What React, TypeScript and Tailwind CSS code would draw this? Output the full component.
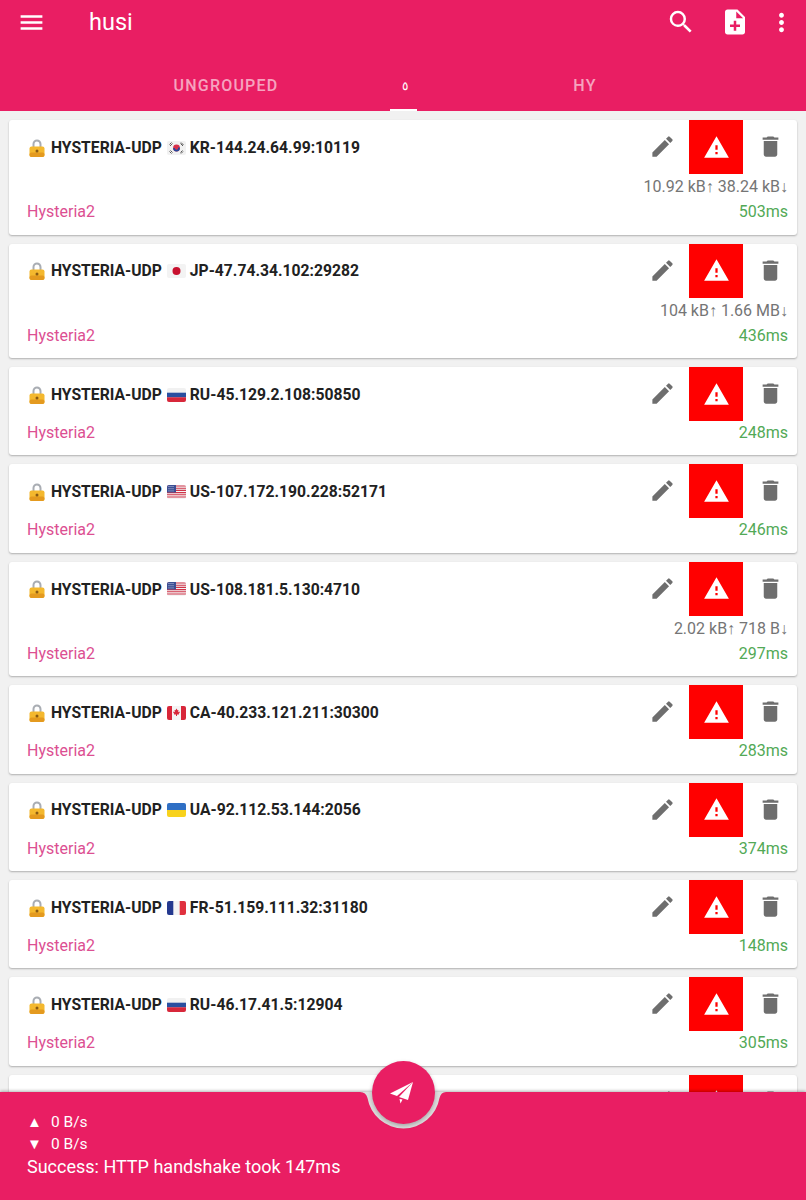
import { MdDelete, MdEdit, MdMenu, MdMoreVert, MdNoteAdd, MdSearch, MdWarning } from "react-icons/md";

type Server = {
  flag?: string;
  host?: string;
  ping?: string;
  traffic?: string;
};

const SERVERS: Server[] = [
  { flag: "kr", host: "KR-144.24.64.99:10119", ping: "503ms", traffic: "10.92 kB↑ 38.24 kB↓" },
  { flag: "jp", host: "JP-47.74.34.102:29282", ping: "436ms", traffic: "104 kB↑ 1.66 MB↓" },
  { flag: "ru", host: "RU-45.129.2.108:50850", ping: "248ms" },
  { flag: "us", host: "US-107.172.190.228:52171", ping: "246ms" },
  { flag: "us", host: "US-108.181.5.130:4710", ping: "297ms", traffic: "2.02 kB↑ 718 B↓" },
  { flag: "ca", host: "CA-40.233.121.211:30300", ping: "283ms" },
  { flag: "ua", host: "UA-92.112.53.144:2056", ping: "374ms" },
  { flag: "fr", host: "FR-51.159.111.32:31180", ping: "148ms" },
  { flag: "ru", host: "RU-46.17.41.5:12904", ping: "305ms" },
  // next row is almost entirely behind the bottom bar, only its buttons peek out
  {},
];

function Flag({ code }: { code: string }) {
  return (
    <svg width="19" height="14" viewBox="0 0 19 14" className="shrink-0 rounded-[2px]">
      {code === "kr" && (
        <>
          <rect width="19" height="14" fill="#f1f1f1" />
          <circle cx="9.500" cy="7" r="3.400" fill="#d8304a" />
          <path d="M6.100 7a3.400 3.400 0 0 0 6.800 0c0-1-1.700-1-1.700 0a1.700 1.700 0 0 1-3.400 0z" fill="#25479b" />
          <path d="M2.500 3.500l2-2M3 5l2.500-2.500M14 1.500l2.500 2.500M13.500 2.500l2.500 2.500M2.500 10.500l2 2M3.500 9.500l2 2M14 12.500l2-2M13.500 11.500l2-2" stroke="#333" strokeWidth=".8" />
        </>
      )}
      {code === "jp" && (
        <>
          <rect width="19" height="14" fill="#f3f3f3" />
          <circle cx="9.500" cy="7" r="4" fill="#c8102e" />
        </>
      )}
      {code === "ru" && (
        <>
          <rect width="19" height="14" fill="#f1f1f1" />
          <rect y="4.700" width="19" height="4.700" fill="#2a4fa0" />
          <rect y="9.300" width="19" height="4.700" fill="#d8273a" />
        </>
      )}
      {code === "us" && (
        <>
          <rect width="19" height="14" fill="#f4f4f4" />
          <path d="M0 1h19M0 3.200h19M0 5.400h19M0 7.600h19M0 9.800h19M0 12h19" stroke="#d0344a" strokeWidth="1.100" />
          <rect width="9" height="7.500" fill="#3c4f94" />
          <path d="M1.500 1.500h6M1.500 3.700h6M1.500 5.900h6" stroke="#dfe3f2" strokeWidth=".8" strokeDasharray="1 1" />
        </>
      )}
      {code === "ca" && (
        <>
          <rect width="19" height="14" fill="#f4f4f4" />
          <rect width="5" height="14" fill="#d8273a" />
          <rect x="14" width="5" height="14" fill="#d8273a" />
          <path d="M9.500 2.500l1 1.800 1-.4-.4 2.300 1.400-.7.300 1-1 1.300.2.700h-2v1.500h-1V8.500h-2l.2-.7-1-1.300.3-1 1.400.7-.4-2.300 1 .4z" fill="#d8273a" />
        </>
      )}
      {code === "ua" && (
        <>
          <rect width="19" height="7" fill="#2f6fc4" />
          <rect y="7" width="19" height="7" fill="#f8d21c" />
        </>
      )}
      {code === "fr" && (
        <>
          <rect width="19" height="14" fill="#f4f4f4" />
          <rect width="6.300" height="14" fill="#24398f" />
          <rect x="12.700" width="6.300" height="14" fill="#e0313f" />
        </>
      )}
    </svg>
  );
}

function Lock() {
  return (
    <svg width="18" height="20" viewBox="0 0 18 20" className="shrink-0 ml-[1px]">
      <path d="M4.500 9V6a4.500 4.500 0 0 1 9 0v3h-2V6a2.500 2.500 0 0 0-5 0v3z" fill="#a9adb3" />
      <rect x="1.500" y="8.500" width="15" height="10.500" rx="2" fill="#f4b82e" />
      <rect x="1.500" y="14.500" width="15" height="4.500" rx="2" fill="#e49a1f" />
      <circle cx="9" cy="13" r="1.500" fill="#8a5a12" />
    </svg>
  );
}

function ServerCard({ server }: { server: Server }) {
  return (
    <div className={`shrink-0 bg-white rounded-[3px] shadow-[0_1px_2px_rgba(0,0,0,0.28)] pl-[18px] ${server.traffic ? "h-[114.5px]" : "h-[88.4px]"}`}>
      <div className="flex items-start h-[54px]">
        <div className="flex items-center flex-1 h-[54px] pt-[1px] text-[15.7px] font-bold text-[#212121]">
          {server.host && (
            <>
              <Lock />
              <span className="ml-[5px]">HYSTERIA-UDP</span>
              <span className="ml-[5px]"><Flag code={server.flag ?? ""} /></span>
              <span className="ml-[4px]">{server.host}</span>
            </>
          )}
        </div>
        <div className="flex items-center text-[#6e6e6e]">
          <div className="w-[54px] h-[54px] flex items-center justify-center pb-[1px]">
            <MdEdit size={27} />
          </div>
          <div className="w-[54px] h-[54px] flex items-center justify-center bg-[#ff0000]">
            <MdWarning size={27} color="#fff" />
          </div>
          <div className="w-[54px] h-[54px] flex items-center justify-center pb-[1px]">
            <MdDelete size={27} />
          </div>
        </div>
      </div>
      {server.traffic && (
        <div className="h-[26px] flex items-center justify-end pr-[9px] text-[16px] text-[#757575]">
          {server.traffic}
        </div>
      )}
      {server.host && (
        <div className="flex items-center justify-between h-[24px] pr-[9px] text-[16px]">
          <span className="text-[#dc4f92]">Hysteria2</span>
          <span className="text-[#52a956]">{server.ping}</span>
        </div>
      )}
    </div>
  );
}

export default function App() {
  return (
    <div className="relative flex flex-col h-[1200px] w-[806px] overflow-hidden bg-[#f1f1f1] font-['Roboto',sans-serif]">
      <header className="shrink-0 h-[111px] bg-[#e91e63] text-white">
        <div className="flex items-center h-[44px]">
          <div className="w-[63px] flex justify-center">
            <MdMenu size={29} />
          </div>
          <span className="ml-[26px] pt-[2px] text-[23.500px] leading-none">husi</span>
          <div className="flex items-center ml-auto pr-[10px]">
            <MdSearch size={30} />
            <MdNoteAdd size={30} className="ml-[24px]" />
            <MdMoreVert size={29} className="ml-[17px]" />
          </div>
        </div>
        <div className="grid grid-cols-3 w-[540px] ml-[135px] h-[67px] text-[16px] font-medium tracking-[1.200px]">
          <div className="flex items-center justify-center pl-[2px] pt-[18px] pb-[2px] text-white/60">UNGROUPED</div>
          <div className="relative flex items-center justify-center pt-[18px] pb-[2px]">
            <span className="text-[12px] tracking-normal">٥</span>
            <div className="absolute bottom-0 left-[75px] w-[27px] h-[2px] bg-white" />
          </div>
          <div className="flex items-center justify-center pt-[18px] pb-[2px] text-white/60">HY</div>
        </div>
      </header>

      <main className="flex-1 min-h-0 overflow-hidden flex flex-col gap-[9px] pt-[9px] px-[9px]">
        {SERVERS.map((server, i) => (
          <ServerCard key={i} server={server} />
        ))}
      </main>

      <footer className="relative shrink-0 h-[108px] bg-[#e91e63] text-white shadow-[0_-1px_3px_rgba(0,0,0,0.3)] pl-[27px] pt-[19px]">
        <div className="flex items-center h-[22px] pt-[1px] text-[15.500px]">
          <span className="w-[24px] text-[15px] leading-none">▲</span>0 B/s
        </div>
        <div className="flex items-center h-[22px] pt-[1px] text-[15.500px]">
          <span className="w-[24px] text-[15px] leading-none">▼</span>0 B/s
        </div>
        <div className="text-[18px] leading-[23px]">Success: HTTP handshake took 147ms</div>
      </footer>

      {/* cradle cut into the bar, then the button on top of it */}
      <svg width="90" height="44" viewBox="0 0 90 44" className="absolute left-[358px] top-[1090px]">
        <path d="M2 2Q8 2 9.500 8A36.500 36.500 0 0 0 81.500 8Q83 2 88 2z" fill="#dedede" />
      </svg>
      <div className="absolute left-[372px] top-[1061px] w-[63px] h-[63px] rounded-full bg-[#e91e63] shadow-[0_2px_4px_rgba(0,0,0,0.25)] flex items-center justify-center">
        <svg width="24" height="22" viewBox="0 0 24 22" className="mr-[3px]">
          <path d="M23 0L0 11.500 7 14z" fill="#fff" />
          <path d="M23 0L9 15 18 18z" fill="#fff" />
          <path d="M9.500 17L10.500 21.500 12.500 17.500z" fill="#fff" />
        </svg>
      </div>
    </div>
  );
}
